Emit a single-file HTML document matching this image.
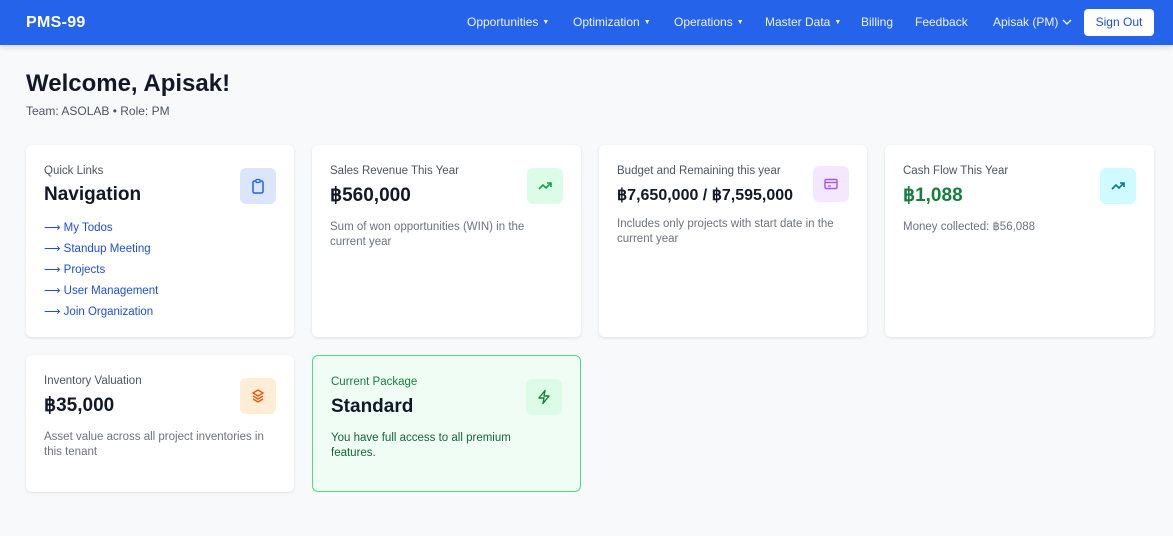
<!DOCTYPE html>
<html><head><style>
*{box-sizing:border-box;margin:0;padding:0}
body{width:1173px;height:536px;background:#f8f9fb;font-family:"Liberation Sans",sans-serif;color:#111827;overflow:hidden;position:relative}
.nav{height:45px;background:#2563eb;box-shadow:0 2px 6px rgba(0,0,0,.15);position:relative;color:#fff}
.brand{position:absolute;left:26px;top:14px;font-size:16px;font-weight:bold;letter-spacing:.3px}
.ni{position:absolute;top:15px;font-size:12px;color:#eef2ff}
.car{font-size:7px;margin-left:4px;vertical-align:2px}
.so{position:absolute;left:1084px;top:9px;width:70px;height:27px;background:#fff;border-radius:4px;color:#1d4ed8;font-size:12px;text-align:center;line-height:27px}
h1{position:absolute;left:26px;top:70px;font-size:24px;font-weight:bold}
.sub{position:absolute;left:26px;top:104px;font-size:12px;color:#4b5563}
.card{position:absolute;background:#fff;border-radius:6px;box-shadow:0 1px 3px rgba(0,0,0,.1);padding:18px}
.lbl{position:absolute;left:18px;top:20px;font-size:11.5px;color:#4b5563}
.val{position:absolute;left:18px;top:39px;font-size:19px;font-weight:bold}
.desc{position:absolute;left:18px;top:75px;font-size:11.5px;color:#6b7280;line-height:15px;width:215px}
.ic{position:absolute;width:36px;height:36px;border-radius:6px;display:flex;align-items:center;justify-content:center}
.links{position:absolute;left:18px;top:73px;font-size:11.5px;color:#1d4ed8;line-height:21px}
</style></head><body>
<div class="nav">
<div class="brand">PMS-99</div>
<div class="ni" style="left:467px">Opportunities<span class="car">▼</span></div>
<div class="ni" style="left:573px">Optimization<span class="car">▼</span></div>
<div class="ni" style="left:674px">Operations<span class="car">▼</span></div>
<div class="ni" style="left:765px">Master Data<span class="car">▼</span></div>
<div class="ni" style="left:861px">Billing</div>
<div class="ni" style="left:915px">Feedback</div>
<div class="ni" style="left:993px">Apisak (PM) <svg width="10" height="8" viewBox="0 0 10 8" style="vertical-align:0"><path d="M1 2l4 4 4-4" stroke="#fff" fill="none" stroke-width="1.3"/></svg></div>
<div class="so">Sign Out</div>
</div>
<h1>Welcome, Apisak!</h1>
<div class="sub">Team: ASOLAB • Role: PM</div>

<div class="card" style="left:26px;top:145px;width:268px;height:192px">
<div class="lbl">Quick Links</div><div class="val">Navigation</div>
<div class="ic" style="left:214px;top:23px;background:#dbe6fd"><svg width="16" height="16" viewBox="0 0 16 16"><rect x="3" y="3" width="10" height="12" rx="1.5" fill="none" stroke="#2563eb" stroke-width="1.5"/><rect x="6" y="1.5" width="4" height="3" rx=".7" fill="#dbe6fd" stroke="#2563eb" stroke-width="1.3"/></svg></div>
<div class="links">⟶ My Todos<br>⟶ Standup Meeting<br>⟶ Projects<br>⟶ User Management<br>⟶ Join Organization</div>
</div>

<div class="card" style="left:312px;top:145px;width:269px;height:192px">
<div class="lbl">Sales Revenue This Year</div><div class="val">฿560,000</div>
<div class="ic" style="left:215px;top:23px;background:#dcfce7"><svg width="16" height="16" viewBox="0 0 16 16"><path d="M2 11l4-4 3 3 5-5M10 5h4v4" fill="none" stroke="#16a34a" stroke-width="1.6"/></svg></div>
<div class="desc">Sum of won opportunities (WIN) in the current year</div>
</div>

<div class="card" style="left:599px;top:145px;width:268px;height:192px">
<div class="lbl">Budget and Remaining this year</div><div class="val" style="font-size:16px;top:40px">฿7,650,000 / ฿7,595,000</div>
<div class="ic" style="left:214px;top:21px;background:#f3e8ff"><svg width="16" height="16" viewBox="0 0 16 16"><rect x="2" y="3.5" width="12" height="9" rx="1.2" fill="none" stroke="#a855f7" stroke-width="1.4"/><path d="M2 6.5h12" stroke="#a855f7" stroke-width="1.4"/><path d="M5 10h3" stroke="#a855f7" stroke-width="1.2"/></svg></div>
<div class="desc" style="top:72px;width:225px">Includes only projects with start date in the current year</div>
</div>

<div class="card" style="left:885px;top:145px;width:269px;height:192px">
<div class="lbl">Cash Flow This Year</div><div class="val" style="color:#15803d">฿1,088</div>
<div class="ic" style="left:215px;top:23px;background:#cffafe"><svg width="16" height="16" viewBox="0 0 16 16"><path d="M2 11l4-4 3 3 5-5M10 5h4v4" fill="none" stroke="#0e7490" stroke-width="1.6"/></svg></div>
<div class="desc">Money collected: ฿56,088</div>
</div>

<div class="card" style="left:26px;top:355px;width:268px;height:137px">
<div class="lbl">Inventory Valuation</div><div class="val">฿35,000</div>
<div class="ic" style="left:214px;top:23px;background:#ffedd5"><svg width="16" height="16" viewBox="0 0 16 16"><path d="M8 2l5 3-5 3-5-3z M3 8l5 3 5-3 M3 11l5 3 5-3" fill="none" stroke="#ea580c" stroke-width="1.4" stroke-linejoin="round"/></svg></div>
<div class="desc" style="width:232px">Asset value across all project inventories in this tenant</div>
</div>

<div class="card" style="left:312px;top:355px;width:269px;height:137px;background:#f0fdf4;border:1px solid #4ade80;box-shadow:none">
<div class="lbl" style="color:#15803d">Current Package</div><div class="val" style="top:40px">Standard</div>
<div class="ic" style="left:213px;top:23px;background:#dcfce7"><svg width="16" height="16" viewBox="0 0 16 16"><path d="M9 1.5L3 9h5l-1 5.5L13 7H8z" fill="none" stroke="#15803d" stroke-width="1.4" stroke-linejoin="round"/></svg></div>
<div class="desc" style="color:#166534;top:75px;width:195px">You have full access to all premium features.</div>
</div>
</body></html>
